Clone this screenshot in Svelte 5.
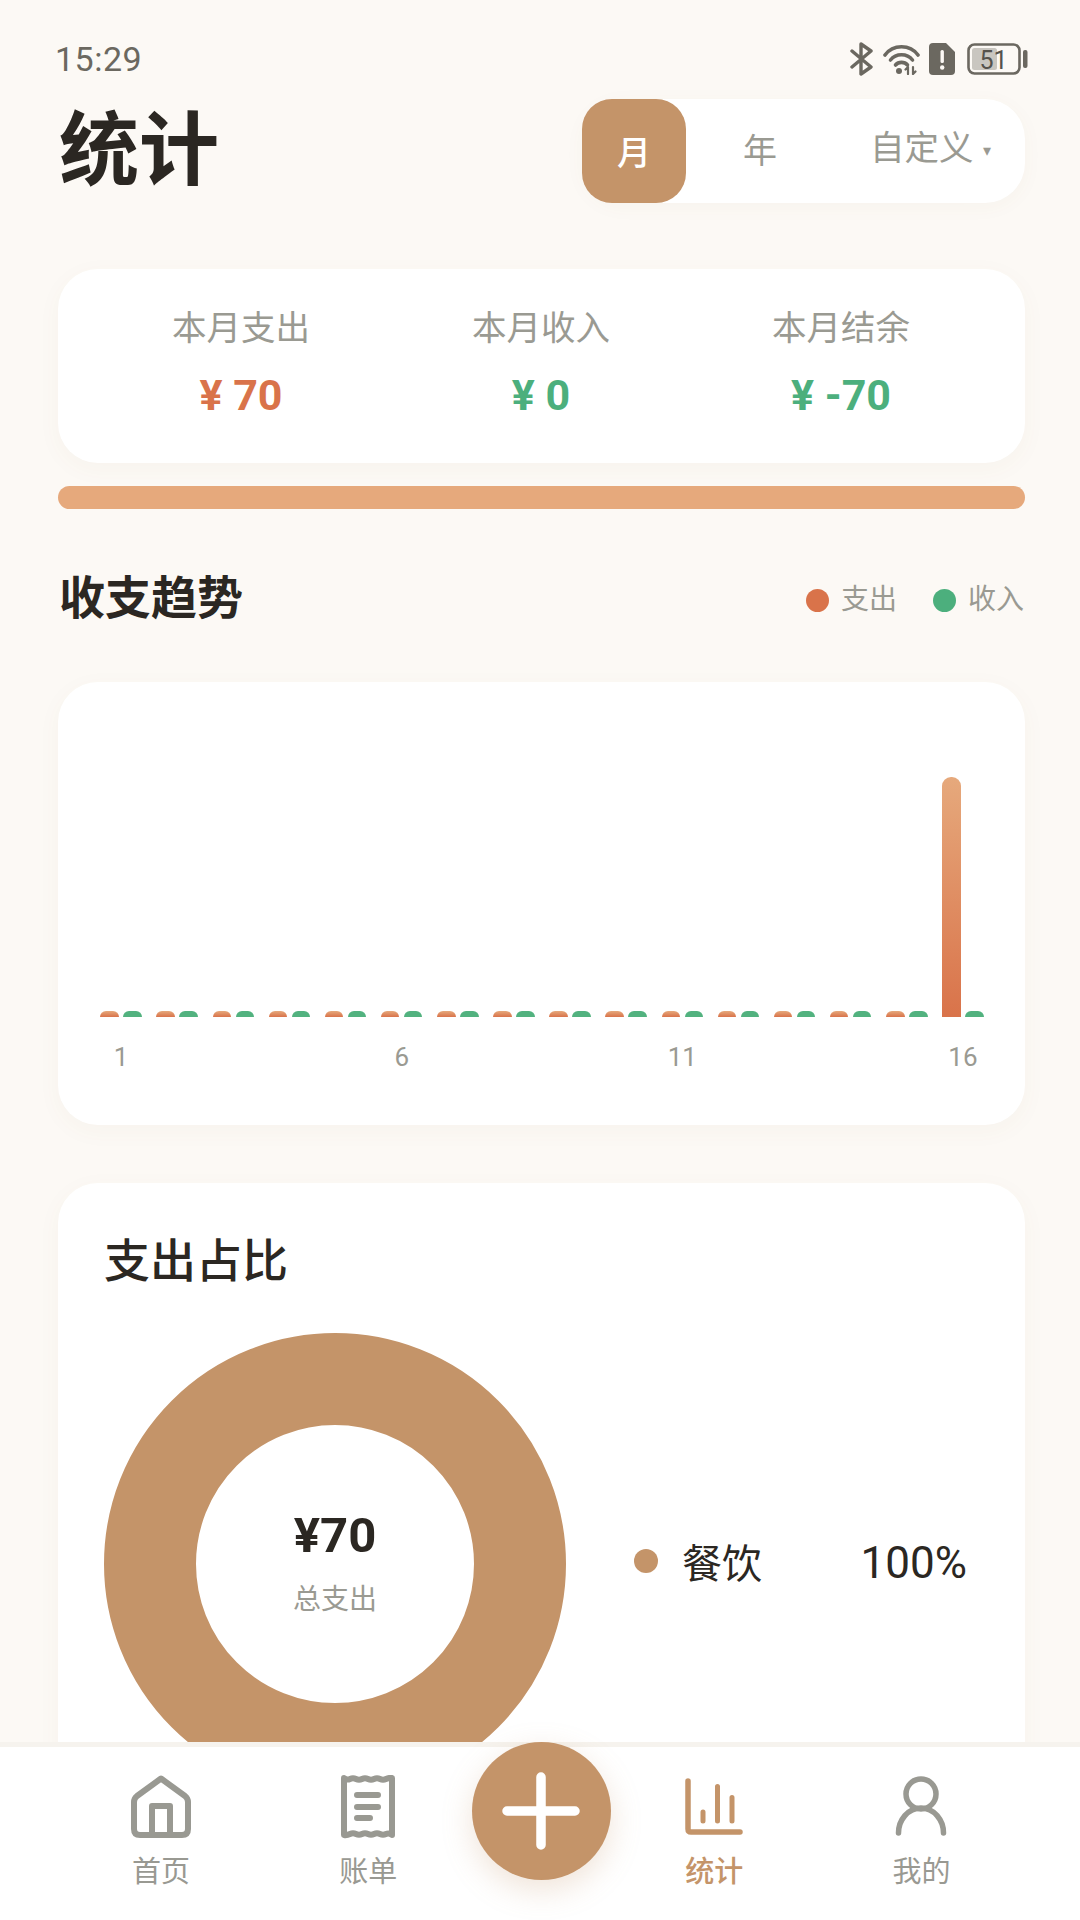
<script>
  const stats = [
    { label: '本月支出', value: '¥ 70', tone: 'out' },
    { label: '本月收入', value: '¥ 0', tone: 'in' },
    { label: '本月结余', value: '¥ -70', tone: 'in' }
  ];

  // only day 16 has spending, all the others draw a stub
  const days = Array.from({ length: 16 }, (_, i) => ({
    day: i + 1,
    out: i === 15 ? 240 : 6,
    showLabel: i % 5 === 0
  }));
</script>

<div class="page">
  <div class="status">
    <span class="time">15:29</span>
    <div class="status-icons">
      <svg width="24" height="34" viewBox="0 0 24 34" fill="none" stroke="#6b6860" stroke-width="3.4" stroke-linejoin="round" stroke-linecap="round">
        <path d="M2 9 L21 25 L11 32 V2 L21 9 L2 25" />
      </svg>
      <svg class="wifi" width="37" height="31" viewBox="0 0 37 31" fill="none" stroke="#6b6860" stroke-width="3.6" stroke-linecap="round">
        <path d="M2 11 C10 0 27 0 35 11" />
        <path d="M7.5 16 C13 9 24 9 29.5 16" />
        <path d="M12.5 21 C15.5 17.5 21.5 17.5 24.5 21" />
        <circle cx="16" cy="27" r="3" fill="#6b6860" stroke="none" />
        <path d="M25 30 V23 M22.5 25.5 L25 23 M30 23 V30 M32.5 27.5 L30 30" stroke-width="2.2" />
      </svg>
      <svg class="sim" width="26" height="32" viewBox="0 0 26 32">
        <path d="M4 0 H17 L26 9 V28 Q26 32 22 32 H4 Q0 32 0 28 V4 Q0 0 4 0 Z" fill="#6b6860" />
        <rect x="11.5" y="7" width="3.4" height="13" rx="1.5" fill="#fcf9f5" />
        <circle cx="13.2" cy="24.5" r="2.2" fill="#fcf9f5" />
      </svg>
      <svg class="battery" width="61" height="32" viewBox="0 0 61 32">
        <rect x="1.5" y="1.5" width="51" height="29" rx="6" fill="none" stroke="#6b6860" stroke-width="2.6" />
        <rect x="5" y="5" width="25" height="22" rx="2.5" fill="#c9c6c0" />
        <text x="26.5" y="26" text-anchor="middle" font-size="25" font-family="Roboto, sans-serif" fill="#55524c">51</text>
        <rect x="56" y="7" width="4.5" height="18" rx="2" fill="#6b6860" />
      </svg>
    </div>
  </div>

  <header class="header">
    <h1>统计</h1>
    <div class="segment">
      <button class="seg active">月</button>
      <button class="seg year">年</button>
      <button class="seg custom">自定义<span class="caret">▾</span></button>
    </div>
  </header>

  <section class="card summary">
    {#each stats as s}
      <div class="stat">
        <span class="stat-label">{s.label}</span>
        <span class="stat-value {s.tone}">{s.value}</span>
      </div>
    {/each}
  </section>

  <div class="progress"></div>

  <div class="section-head">
    <h2>收支趋势</h2>
    <div class="legend">
      <i class="dot out-bg"></i><span>支出</span>
      <i class="dot in-bg second"></i><span>收入</span>
    </div>
  </div>

  <section class="card trend">
    <div class="chart">
      {#each days as d (d.day)}
        <div class="day">
          <div class="bars">
            <div class="bar out-bar" style="height: {d.out}px"></div>
            <div class="bar in-bar"></div>
          </div>
          <span class="tick">{d.showLabel ? d.day : ''}</span>
        </div>
      {/each}
    </div>
  </section>

  <section class="card share">
    <h3>支出占比</h3>
    <div class="share-body">
      <div class="donut">
        <strong>¥70</strong>
        <span>总支出</span>
      </div>
      <div class="share-row">
        <i class="share-dot"></i>
        <span class="share-name">餐饮</span>
        <span class="share-pct">100%</span>
      </div>
    </div>
  </section>

  <nav class="nav">
    <div class="nav-item">
      <svg width="60" height="64" viewBox="0 0 60 64" fill="none" stroke="#999992" stroke-width="6" stroke-linejoin="round">
        <path d="M30 3.5 L54 21 Q57 23.5 57 27 V54 Q57 60 51 60 H9 Q3 60 3 54 V27 Q3 23.5 6 21 Z" />
        <path d="M21 60 V31 H39 V60" />
      </svg>
      <span>首页</span>
    </div>
    <div class="nav-item">
      <svg width="54" height="64" viewBox="0 0 54 64" fill="none" stroke="#999992" stroke-width="6" stroke-linecap="round" stroke-linejoin="round">
        <path d="M3 3 Q6 5.500 9 4 T15 4 T21 4 T27 4 T33 4 T39 4 T45 4 T51 3 V60 Q48 57.500 45 59 T39 59 T33 59 T27 59 T21 59 T15 59 T9 59 T3 60 Z" />
        <path d="M16 20 H37 M16 32 H37 M16 43 H29" />
      </svg>
      <span>账单</span>
    </div>
    <div class="nav-gap">
      <button class="fab" aria-label="记一笔">
        <svg width="78" height="78" viewBox="0 0 78 78" stroke="#fff" stroke-width="9.500" stroke-linecap="round">
          <path d="M39 5 V73 M5 39 H73" />
        </svg>
      </button>
    </div>
    <div class="nav-item current">
      <svg width="60" height="64" viewBox="0 0 60 64" fill="none" stroke="#c49469" stroke-linecap="round" stroke-linejoin="round">
        <path d="M4 6 V54 Q4 57 7 57 H56" stroke-width="5.500" />
        <path d="M19 37 V46 M33.500 11.500 V46 M48 22.500 V46" stroke-width="5" />
      </svg>
      <span>统计</span>
    </div>
    <div class="nav-item">
      <svg width="58" height="64" viewBox="0 0 58 64" fill="none" stroke="#999992" stroke-width="5.500" stroke-linecap="round">
        <circle cx="29" cy="19" r="15" />
        <path d="M6.500 58 C6.500 45 16 33 29 33 C42 33 51.500 45 51.500 58" />
      </svg>
      <span>我的</span>
    </div>
  </nav>
</div>

<style>
  :global(body) {
    margin: 0;
    background: #fcf9f5;
  }

  .page {
    position: relative;
    height: 1920px;
    overflow: hidden;
    background: #fcf9f5;
    font-family: Roboto, "Noto Sans CJK SC", sans-serif;
    color: #2b2722;
  }

  .status {
    display: flex;
    justify-content: space-between;
    align-items: center;
    height: 38px;
    padding: 40px 52px 0 55px;
  }
  .time { font-size: 34px; color: #6b6860; letter-spacing: 0.5px; }
  .status-icons { display: flex; align-items: center; gap: 9px; }
  .status-icons svg { display: block; }
  .battery { margin-left: 3px; }

  .header {
    display: flex;
    justify-content: space-between;
    align-items: center;
    height: 104px;
    margin-top: 21px;
    padding: 0 55px 0 59px;
  }
  h1 { margin: 0; font-size: 80px; font-weight: 700; line-height: 1; }

  .segment {
    display: flex;
    width: 443px;
    height: 104px;
    background: #fff;
    border-radius: 40px;
    box-shadow: 0 4px 20px rgba(120, 90, 60, 0.04);
  }
  .seg {
    border: 0;
    background: none;
    padding: 0;
    font-family: inherit;
    font-size: 34px;
    color: #9a9a92;
    line-height: 1;
  }
  .seg.active {
    width: 104px;
    padding-top: 3px;
    background: #c49469;
    border-radius: 30px;
    color: #fff;
    font-weight: 500;
  }
  .seg.year { width: 148px; }
  .seg.custom { padding: 0 0 5px 36px; font-size: 34.500px; white-space: nowrap; }
  .caret { font-size: 16px; margin-left: 9px; vertical-align: 4px; }

  .card {
    margin: 0 55px 0 58px;
    background: #fff;
    border-radius: 40px;
    box-shadow: 0 6px 24px rgba(120, 90, 60, 0.04);
  }

  .summary {
    display: flex;
    height: 194px;
    margin-top: 66px;
    padding: 0 34px 0 33px;
  }
  .stat {
    flex: 1;
    display: flex;
    flex-direction: column;
    align-items: center;
    padding-top: 35px;
    gap: 18px;
  }
  .stat-label { font-size: 34.500px; line-height: 48px; color: #9a9a92; }
  .stat-value { font-size: 43px; font-weight: 700; line-height: 50px; }
  .stat-value.out { color: #d9734a; }
  .stat-value.in { color: #4caf7d; }

  .progress {
    height: 23px;
    margin: 23px 55px 0 58px;
    background: #e6a97c;
    border-radius: 12px;
  }

  .section-head {
    display: flex;
    justify-content: space-between;
    align-items: center;
    height: 60px;
    margin-top: 59px;
    padding: 0 56px 0 59px;
  }
  h2 { margin: 0; font-size: 46px; font-weight: 700; line-height: 60px; }
  .legend {
    display: flex;
    align-items: center;
    font-size: 28px;
    color: #9a9a92;
  }
  .legend span { margin-top: -2px; }
  .dot {
    width: 23px;
    height: 23px;
    border-radius: 50%;
    margin-right: 12px;
    margin-top: 4px;
  }
  .dot.second { margin-left: 36px; }
  .out-bg { background: #d9734a; }
  .in-bg { background: #4caf7d; }

  .trend {
    height: 443px;
    margin-top: 54px;
    padding: 90px 34px 0 35px;
    box-sizing: border-box;
  }
  .chart { display: flex; }
  .day {
    flex: 1;
    min-width: 0;
    display: flex;
    flex-direction: column;
    align-items: center;
  }
  .bars {
    display: flex;
    align-items: flex-end;
    justify-content: center;
    gap: 4.500px;
    height: 245px;
  }
  .bar { width: 18.500px; border-radius: 9px 9px 0 0; }
  .out-bar { background: linear-gradient(#e6a97c, #d9734a); }
  .in-bar { height: 6px; background: #52b27f; }
  .tick {
    height: 36px;
    margin-top: 22px;
    font-size: 26px;
    line-height: 36px;
    color: #9a9a92;
  }

  .share {
    height: 700px;
    margin-top: 58px;
    padding: 46px 57px 0 46px;
    box-sizing: border-box;
  }
  h3 { margin: 0; font-size: 46px; font-weight: 500; line-height: 64px; }
  .share-body { display: flex; align-items: center; margin-top: 40px; }
  .donut {
    flex: none;
    display: flex;
    flex-direction: column;
    align-items: center;
    justify-content: center;
    width: 462px;
    height: 462px;
    box-sizing: border-box;
    border: 92px solid #c49469;
    border-radius: 50%;
  }
  .donut strong { font-size: 49px; font-weight: 700; line-height: 56px; margin-top: -1px; }
  .donut span { font-size: 28px; line-height: 40px; color: #9a9a92; margin-top: 16px; }
  .share-row { flex: 1; display: flex; align-items: center; margin: -6px 0 0 68px; }
  .share-dot { width: 24px; height: 24px; border-radius: 50%; background: #c49469; margin-right: 24px; }
  .share-name { font-size: 40px; }
  .share-pct { font-size: 44px; margin: 4px 1px 0 auto; }

  .nav {
    position: absolute;
    left: 0;
    right: 0;
    bottom: 0;
    display: flex;
    height: 173px;
    padding: 28px 55px 0 57.500px;
    box-sizing: border-box;
    background: #fff;
  }
  .nav::before {
    content: '';
    position: absolute;
    left: 0;
    right: 0;
    top: -5px;
    height: 5px;
    background: #f6f3ee;
  }
  .nav-item {
    flex: 1;
    display: flex;
    flex-direction: column;
    align-items: center;
    font-size: 29px;
    line-height: 38px;
    color: #999992;
  }
  .nav-item svg { display: block; }
  .nav-item span { margin-top: 14px; }
  .nav-item.current { color: #c49469; font-weight: 500; }
  .nav-gap { position: relative; flex: none; width: 139px; }
  .fab {
    position: absolute;
    left: 0;
    top: -33px;
    display: flex;
    align-items: center;
    justify-content: center;
    width: 139px;
    height: 138px;
    padding: 0;
    border: 0;
    border-radius: 50%;
    background: #c49469;
    box-shadow: 0 10px 30px rgba(196, 148, 105, 0.25);
  }
</style>
